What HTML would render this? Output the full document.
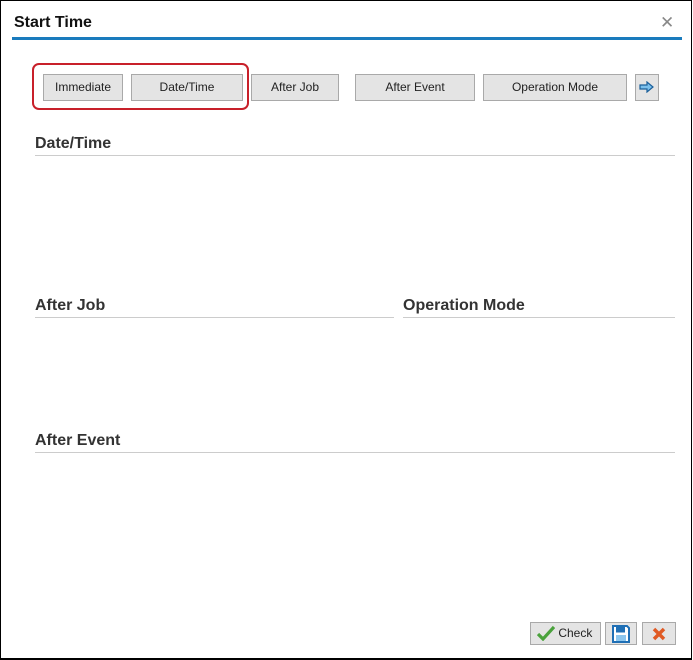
<!DOCTYPE html>
<html><head><style>
*{margin:0;padding:0;box-sizing:border-box}
body{width:693px;height:660px;background:#fff;font-family:"Liberation Sans",Arial,sans-serif;position:relative;overflow:hidden}
.frame{position:absolute;left:0;top:0;width:692px;height:660px;border:1px solid #000;border-bottom:2px solid #000}
.abs{position:absolute}
.title{left:14px;top:14px;font-size:16px;font-weight:bold;color:#111}
.close{left:660px;top:13px;font-size:17px;color:#888}
.bl{left:12px;top:37px;width:670px;height:3px;background:#1a7bbd}
.btn{position:absolute;top:74px;height:27px;background:#e4e4e4;border:1px solid #a9a9a9;font-size:12px;color:#222;text-align:center;line-height:25px}
.red{left:32px;top:63px;width:217px;height:47px;border:2px solid #c8202a;border-radius:7px}
.h{font-size:16px;font-weight:bold;color:#333}
.ln{height:1px;background:#ccc}
.bb{position:absolute;top:622px;height:23px;background:#e4e4e4;border:1px solid #a9a9a9}
</style></head><body>
<div class="frame"></div>
<div class="abs title">Start Time</div>
<div class="abs close">✕</div>
<div class="abs bl"></div>
<div class="abs red"></div>
<div class="btn" style="left:43px;width:80px">Immediate</div>
<div class="btn" style="left:131px;width:112px">Date/Time</div>
<div class="btn" style="left:251px;width:88px">After Job</div>
<div class="btn" style="left:355px;width:120px">After Event</div>
<div class="btn" style="left:483px;width:144px">Operation Mode</div>
<div class="btn" style="left:635px;width:24px"><svg width="16" height="12" viewBox="0 0 16 12" style="margin-top:6px"><path d="M1 4h7V1l6 5-6 5V8H1z" fill="#7cc0ec" stroke="#1a5f9a" stroke-width="1.2"/></svg></div>
<div class="abs h" style="left:35px;top:135px">Date/Time</div>
<div class="abs ln" style="left:35px;top:155px;width:640px"></div>
<div class="abs h" style="left:35px;top:297px">After Job</div>
<div class="abs ln" style="left:35px;top:317px;width:359px"></div>
<div class="abs h" style="left:403px;top:297px">Operation Mode</div>
<div class="abs ln" style="left:403px;top:317px;width:272px"></div>
<div class="abs h" style="left:35px;top:432px">After Event</div>
<div class="abs ln" style="left:35px;top:452px;width:640px"></div>
<div class="bb" style="left:530px;width:71px;font-size:12px;color:#222;line-height:21px;padding-left:6px"><svg width="18" height="16" viewBox="0 0 18 16" style="vertical-align:-4px"><path d="M1 9l5 5L17 2" fill="none" stroke="#4aa23c" stroke-width="3.2"/></svg> Check</div>
<div class="bb" style="left:605px;width:32px"><svg width="18" height="18" viewBox="0 0 18 18" style="margin:2px 6px"><path d="M1 1h14l2 2v14H1z" fill="#fff" stroke="#1f6fb5" stroke-width="2"/><rect x="4" y="1.5" width="9" height="6" fill="#1f6fb5"/><rect x="4" y="10" width="10" height="6" fill="#8cc6ee"/></svg></div>
<div class="bb" style="left:642px;width:34px"><svg width="14" height="14" viewBox="0 0 14 14" style="margin:4px 9px"><path d="M2 2l10 10M12 2L2 12" stroke="#e05a24" stroke-width="3.5"/></svg></div>
</body></html>
